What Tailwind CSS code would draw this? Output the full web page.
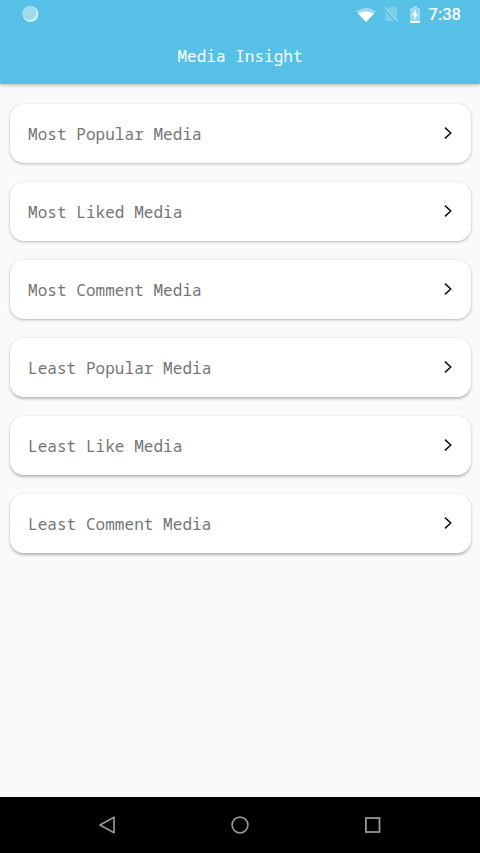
<!DOCTYPE html>
<html lang="en">
<head>
<meta charset="utf-8">
<title>Media Insight</title>
<script src="https://cdn.jsdelivr.net/npm/@tailwindcss/browser@4"></script>
</head>
<body class="flex h-[853px] w-[480px] flex-col overflow-hidden bg-[#fafafa] font-['Droid_Sans_Mono','Noto_Sans_Mono','DejaVu_Sans_Mono',monospace]">
<header class="z-10 h-[84px] shrink-0 bg-[#56c0e6] text-white shadow-[0_1px_4px_rgba(0,0,0,0.3)]">
  <div class="flex h-7 items-center pr-[19px] pl-[22px]">
    <svg class="size-[17px]" viewBox="0 0 17 17"><circle cx="8.5" cy="8.2" r="7.9" fill="#c8f4fb"/><circle cx="7.4" cy="7.1" r="7" fill="#a0daee"/></svg>
    <svg class="mt-px ml-auto h-[14px] w-[20px]" viewBox="0 0 20 14"><path d="M0 3.2Q10-3.2 20 3.2L10 14Z" fill="#fff" fill-opacity=".4"/><path d="M2 5.4Q10 1.6 18 5.4L10 14Z" fill="#fff"/></svg>
    <svg class="ml-[8px] h-[16px] w-[15px]" viewBox="0 0 15 16"><path d="M5 1h8v13L3 3.2ZM1.4 5.2L10.2 15H1.4Z" fill="#fff" fill-opacity=".24"/><path d="M.7 1.3L13.7 15.5" stroke="#a4d6e8" stroke-width="1.2"/></svg>
    <svg class="ml-[11px] h-[17px] w-[10px]" viewBox="0 0 10 17"><path d="M3 0h4v2h3v15H0V2h3Z" fill="#fff" fill-opacity=".4"/><path d="M0 15.3h10V17H0ZM6 3.5L2 9.3h2.3v4.2L8.2 8H6Z" fill="#fff"/></svg>
    <span class="ml-[9px] pt-0.5 font-[Roboto,sans-serif] text-[16.5px] leading-7 font-medium">7:38</span>
  </div>
  <h1 class="text-center text-[16px] leading-[56px] tracking-[0.03px]">Media Insight</h1>
</header>
<main class="flex flex-1 flex-col gap-[19px] px-[9.5px] pt-5">
  <a class="flex h-[59px] shrink-0 items-center justify-between rounded-[14px] bg-white px-[18.5px] text-[16px] tracking-[0.05px] text-[#757575] shadow-[0_1px_3px_rgba(0,0,0,0.25),0_0_1px_rgba(0,0,0,0.1)]"><span>Most Popular Media</span><svg class="mb-px h-3 w-2" viewBox="0 0 8 12" fill="none" stroke="#151515" stroke-width="1.6"><path d="M1 .6L6.7 6L1 11.4"/></svg></a>
  <a class="flex h-[59px] shrink-0 items-center justify-between rounded-[14px] bg-white px-[18.5px] text-[16px] tracking-[0.05px] text-[#757575] shadow-[0_1px_3px_rgba(0,0,0,0.26),0_0_1px_rgba(0,0,0,0.08)]"><span>Most Liked Media</span><svg class="mb-px h-3 w-2" viewBox="0 0 8 12" fill="none" stroke="#151515" stroke-width="1.6"><path d="M1 .6L6.7 6L1 11.4"/></svg></a>
  <a class="flex h-[59px] shrink-0 items-center justify-between rounded-[14px] bg-white px-[18.5px] text-[16px] tracking-[0.05px] text-[#757575] shadow-[0_1px_3px_rgba(0,0,0,0.28),0_0_1px_rgba(0,0,0,0.06)]"><span>Most Comment Media</span><svg class="mb-px h-3 w-2" viewBox="0 0 8 12" fill="none" stroke="#151515" stroke-width="1.6"><path d="M1 .6L6.7 6L1 11.4"/></svg></a>
  <a class="flex h-[59px] shrink-0 items-center justify-between rounded-[14px] bg-white px-[18.5px] text-[16px] tracking-[0.05px] text-[#757575] shadow-[0_1.5px_3px_rgba(0,0,0,0.26)]"><span>Least Popular Media</span><svg class="mb-px h-3 w-2" viewBox="0 0 8 12" fill="none" stroke="#151515" stroke-width="1.6"><path d="M1 .6L6.7 6L1 11.4"/></svg></a>
  <a class="flex h-[59px] shrink-0 items-center justify-between rounded-[14px] bg-white px-[18.5px] text-[16px] tracking-[0.05px] text-[#757575] shadow-[0_1.5px_3px_rgba(0,0,0,0.27)]"><span>Least Like Media</span><svg class="mb-px h-3 w-2" viewBox="0 0 8 12" fill="none" stroke="#151515" stroke-width="1.6"><path d="M1 .6L6.7 6L1 11.4"/></svg></a>
  <a class="flex h-[59px] shrink-0 items-center justify-between rounded-[14px] bg-white px-[18.5px] text-[16px] tracking-[0.05px] text-[#757575] shadow-[0_1.5px_3px_rgba(0,0,0,0.28)]"><span>Least Comment Media</span><svg class="mb-px h-3 w-2" viewBox="0 0 8 12" fill="none" stroke="#151515" stroke-width="1.6"><path d="M1 .6L6.7 6L1 11.4"/></svg></a>
</main>
<nav class="flex h-14 shrink-0 items-center justify-between bg-black pr-[99px] pl-[97px]">
  <svg class="size-[18px]" viewBox="0 0 18 18" fill="none" stroke="#969696" stroke-width="1.7"><path d="M17 1.2V16.8L3 9Z" stroke-linejoin="round"/></svg>
  <svg class="size-[18px]" viewBox="0 0 18 18" fill="none" stroke="#969696" stroke-width="1.7"><circle cx="9" cy="9" r="7.9"/></svg>
  <svg class="size-4" viewBox="0 0 16 16" fill="none" stroke="#969696" stroke-width="1.8"><rect x=".9" y="1" width="13.6" height="14"/></svg>
</nav>
</body>
</html>
